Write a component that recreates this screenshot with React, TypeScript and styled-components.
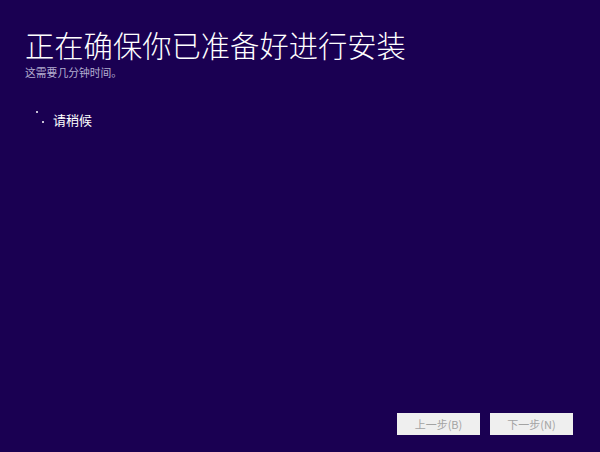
import React from "react";
import styled, { createGlobalStyle } from "styled-components";

const Global = createGlobalStyle`
  html, body { margin: 0; padding: 0; background: #1a0052; }
  body { font-family: "Noto Sans CJK SC", "Microsoft YaHei", sans-serif; }
`;

const Page = styled.div`
  width: 600px;
  height: 452px;
  background: #1a0052;
  display: flex;
  flex-direction: column;
  box-sizing: border-box;
  padding: 23px 27px 17px 25px;
  color: #ffffff;
`;

const Title = styled.h1`
  margin: 0;
  font-size: 29.3px;
  font-weight: 300;
  line-height: 42px;
  color: #ffffff;
`;

const Subtitle = styled.div`
  margin-top: 0;
  font-size: 10.8px;
  line-height: 15px;
  color: #b4aed0;
`;

const Status = styled.div`
  margin-top: 31px;
  display: flex;
  align-items: flex-start;
`;

const Spinner = styled.div`
  position: relative;
  width: 18px;
  height: 20px;
  margin-left: 10px;
`;

const Dot = styled.span<{ $x: number; $y: number }>`
  position: absolute;
  left: ${(p) => p.$x}px;
  top: ${(p) => p.$y}px;
  width: 2px;
  height: 2px;
  border-radius: 1px;
  background: #ffffff;
`;

const StatusText = styled.span`
  font-size: 13px;
  line-height: 18px;
  color: #ffffff;
  margin-top: 0;
`;

const Spacer = styled.div`
  flex: 1;
`;

const Footer = styled.div`
  display: flex;
  justify-content: flex-end;
  gap: 10px;
`;

const Button = styled.button`
  width: 83px;
  height: 22px;
  padding: 0;
  border: none;
  background: #efefef;
  color: #a3a3a3;
  font-family: "Noto Sans CJK SC", sans-serif;
  font-size: 11px;
  line-height: 22px;
  cursor: default;
`;

export default function App() {
  return (
    <>
      <Global />
      <Page>
        <Title>正在确保你已准备好进行安装</Title>
        <Subtitle>这需要几分钟时间。</Subtitle>
        <Status>
          <Spinner>
            <Dot $x={1} $y={0} />
            <Dot $x={7} $y={10} />
          </Spinner>
          <StatusText>请稍候</StatusText>
        </Status>
        <Spacer />
        <Footer>
          <Button disabled>上一步(B)</Button>
          <Button disabled>下一步(N)</Button>
        </Footer>
      </Page>
    </>
  );
}
